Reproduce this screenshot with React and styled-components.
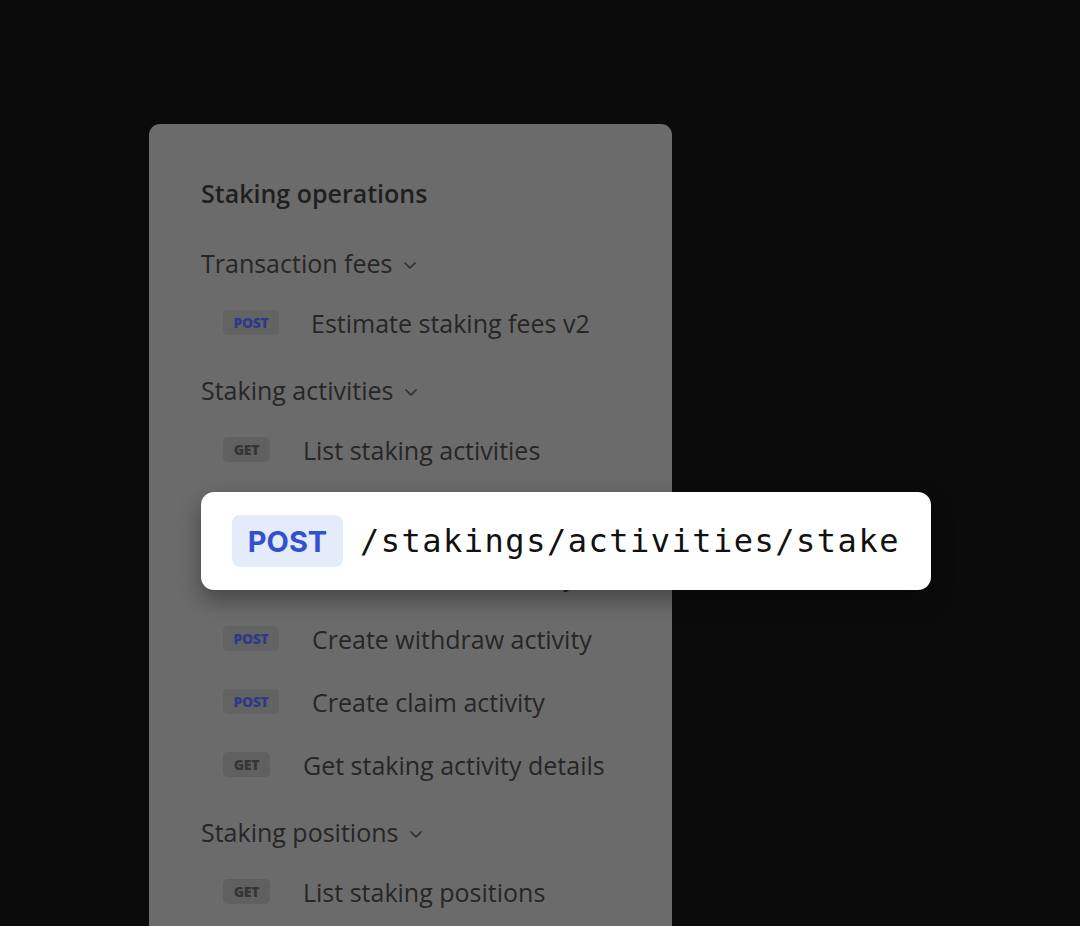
import React from "react"
import styled, { createGlobalStyle } from "styled-components"

const Global = createGlobalStyle`
	html, body {
		margin: 0;
		padding: 0;
		background: #0b0b0b;
		overflow: hidden;
	}
`

const sections = [
	{
		title: "Transaction fees",
		items: [{ method: "POST", label: "Estimate staking fees v2", wide: true }],
	},
	{
		title: "Staking activities",
		items: [
			{ method: "GET", label: "List staking activities" },
			{ method: "POST", label: "Create stake activity" },
			{ method: "POST", label: "Create unstake activity" },
			{ method: "POST", label: "Create withdraw activity" },
			{ method: "POST", label: "Create claim activity" },
			{ method: "GET", label: "Get staking activity details" },
		],
	},
	{
		title: "Staking positions",
		items: [{ method: "GET", label: "List staking positions" }],
	},
]

const Chevron = () => (
	<svg width="14" height="9" viewBox="0 0 14 9" fill="none">
		<path d="M2 2l5 5 5-5" stroke="#2e2e2e" strokeWidth="1.7" strokeLinecap="round" strokeLinejoin="round" />
	</svg>
)

const App = () => {
	return (
		<>
		<Global />
		<Page>
			<Stage>
				<Panel>
					<Title>Staking operations</Title>
					{sections.map((s) => (
						<Section key={s.title}>
							<SectionHead>
								{s.title}
								<Chevron />
							</SectionHead>
							{s.items.map((it) => (
								<Item key={it.label}>
									<Badge $post={it.method === "POST"}>{it.method}</Badge>
									<ItemLabel $wide={it.wide}>{it.label}</ItemLabel>
								</Item>
							))}
						</Section>
					))}
				</Panel>
				<Popup>
					<BigBadge>POST</BigBadge>
					<Path>/stakings/activities/stake</Path>
				</Popup>
			</Stage>
		</Page>
		</>
	)
}

const Page = styled.div`
	width: 1080px;
	height: 926px;
	overflow: hidden;
	background: #0b0b0b;
	font-family: "Open Sans", "Noto Sans", sans-serif;
`
const Stage = styled.div`
	position: relative;
	padding: 124px 0 0 149px;
`
const Panel = styled.div`
	width: 523px;
	height: 900px;
	box-sizing: border-box;
	padding: 56px 0 0 52px;
	background: #6b6b6b;
	border-radius: 11px;
	display: flex;
	flex-direction: column;
`
const Title = styled.div`
	font-size: 25px;
	font-weight: 600;
	color: #1f1f1f;
	line-height: 26px;
	margin-bottom: 43px;
`
const Section = styled.div`
	display: flex;
	flex-direction: column;
	margin-bottom: 22px;
`
const SectionHead = styled.div`
	display: flex;
	align-items: center;
	gap: 11px;
	font-size: 25px;
	color: #262626;
	height: 28px;
	line-height: 28px;
	margin-bottom: 14px;
	svg { margin-top: 4px; }
`
const Item = styled.div`
	display: flex;
	align-items: center;
	height: 63px;
	padding-left: 22px;
`
const Badge = styled.span`
	display: inline-flex;
	align-items: center;
	justify-content: center;
	height: 25px;
	width: ${(p) => (p.$post ? "56px" : "47px")};
	border-radius: 5px;
	background: ${(p) => (p.$post ? "#636363" : "#5f605f")};
	color: ${(p) => (p.$post ? "#2f3a86" : "#353535")};
	font-size: 14px;
	font-weight: 800;
	letter-spacing: -0.3px;
`
const ItemLabel = styled.span`
	margin-left: ${(p) => (p.$wide ? "32px" : "33px")};
	font-size: 25px;
	color: #262626;
`
const Popup = styled.div`
	position: absolute;
	left: 201px;
	top: 492px;
	width: 730px;
	height: 98px;
	box-sizing: border-box;
	background: #ffffff;
	border-radius: 13px;
	box-shadow: 0 10px 22px rgba(0, 0, 0, 0.35);
	display: flex;
	align-items: center;
	padding-left: 31px;
	gap: 17px;
`
const BigBadge = styled.span`
	display: inline-flex;
	align-items: center;
	justify-content: center;
	width: 111px;
	height: 52px;
	border-radius: 8px;
	background: #e4ecfb;
	color: #3450cf;
	font-family: "Inter", "Liberation Sans", sans-serif;
	font-size: 29px;
	font-weight: 700;
`
const Path = styled.span`
	font-family: "DejaVu Sans Mono", "Liberation Mono", monospace;
	font-size: 32px;
	letter-spacing: 1.5px;
	color: #111111;
`

export default App
